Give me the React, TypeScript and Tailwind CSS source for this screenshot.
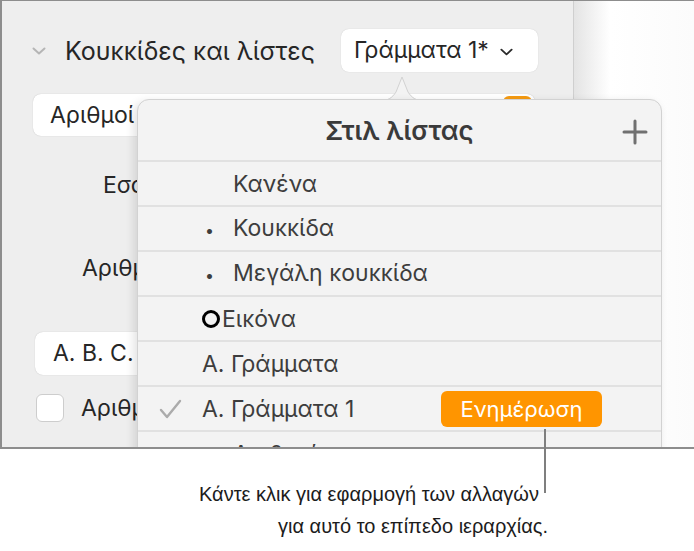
const font = { fontFamily: "Inter, 'Noto Sans', sans-serif" }
const calloutFont = { fontFamily: "'Liberation Sans', Arial, sans-serif" }

const Chevron = ({ className }: { className: string }) => (
  <svg viewBox="0 0 14 8" className={className} fill="none" stroke="currentColor" strokeWidth="2" strokeLinecap="round" strokeLinejoin="round">
    <path d="M1.5 1.5 7 6.5l5.5-5" />
  </svg>
)

const Row = ({ mark, children, last }: { mark?: React.ReactNode; children: React.ReactNode; last?: boolean }) => (
  <div className={`relative flex h-[45px] items-center ${last ? "" : "border-b-2 border-[#e1e1e1]"}`}>
    <div className="flex w-[64px] shrink-0 justify-end pr-[2px]">{mark}</div>
    <div className="text-[23px] leading-[28px] text-[#3d3d3d]">{children}</div>
  </div>
)

const Bullet = () => <span className="ml-[3px] mr-[19px] text-[16px]">•</span>

export default function App() {
  return (
    <div className="relative h-[551px] w-[694px] overflow-hidden bg-white" style={font}>
      {/* framed screenshot */}
      <div className="relative flex h-[449px] overflow-hidden border-b-2 border-l-2 border-t border-[#8d8d8d]">
        <div className="w-[572px] shrink-0 border-r border-[#cfcfcf] bg-[#eeeeee]">
          <div className="mt-[28px] flex h-[43px] items-center pl-[30px]">
            <Chevron className="h-[8px] w-[14px] text-[#b5b5b5]" />
            <span className="ml-[19px] w-[276px] text-[25px] leading-[30px] text-[#262626]">Κουκκίδες και λίστες</span>
            <div className="flex h-[43px] w-[197px] items-center rounded-lg bg-white pl-[13px] text-[23px] text-[#262626] shadow-[0_0_1px_rgba(0,0,0,0.2)]">
              Γράμματα 1*
              <Chevron className="ml-[11px] mt-[2px] h-[8px] w-[13px] text-[#2a2a2a]" />
            </div>
          </div>
          <div className="ml-[31px] mt-[22px] flex h-[42px] w-[502px] items-start justify-between rounded-lg bg-white pl-[17px] shadow-[0_0_1px_rgba(0,0,0,0.25)]">
            <span className="mt-[7px] text-[23px] leading-[28px] text-[#262626]">Αριθμοί</span>
            <div className="mr-[3px] mt-[2px] h-[28px] w-[29px] rounded-md bg-[#f59b12]" />
          </div>
          <div className="ml-[101px] mt-[35px] text-[23px] leading-[28px] text-[#262626]">Εσοχή</div>
          <div className="ml-[80px] mt-[55px] text-[23px] leading-[28px] text-[#262626]">Αριθμός</div>
          <div className="ml-[33px] mt-[50px] flex h-[43px] w-[240px] items-center rounded-lg bg-white pl-[18px] text-[23px] text-[#262626] shadow-[0_0_1px_rgba(0,0,0,0.25)]">
            A. B. C.
          </div>
          <div className="ml-[34px] mt-[18px] flex h-[29px] items-center">
            <div className="h-[28px] w-[28px] rounded-md border border-[#cdcdcd] bg-white" />
            <span className="ml-[17px] text-[23px] leading-[28px] text-[#262626]">Αριθμοί</span>
          </div>
        </div>
        <div className="flex-1 bg-gradient-to-r from-[#e4e4e4] via-white via-30% to-[#fbfbfb]" />

        {/* popover arrow */}
        <svg className="absolute left-[376px] top-[73px] h-[28px] w-[48px]" viewBox="0 0 48 28">
          <path d="M0 27 C10 27 14 24 18 18 L24 3 L30 18 C34 24 38 27 48 27 L48 28 L0 28 Z" fill="#f3f3f3" stroke="#d2d2d2" strokeWidth="1" />
        </svg>

        {/* popover */}
        <div className="absolute left-[135px] top-[98px] w-[525px] rounded-[12px] border border-[#d2d2d2] bg-[#f3f3f3] shadow-[-3px_3px_10px_rgba(0,0,0,0.12)]">
          <div className="relative flex h-[62px] items-center justify-center border-b-2 border-[#e1e1e1]">
            <span className="text-[26px] font-semibold text-[#3a3a3a]">Στιλ λίστας</span>
            <svg className="absolute right-[13px] top-[19px] h-[26px] w-[26px]" viewBox="0 0 26 26" stroke="#707070" strokeWidth="3" strokeLinecap="round">
              <path d="M13 2v22M2 13h22" />
            </svg>
          </div>
          <Row><span className="ml-[31px]">Κανένα</span></Row>
          <Row><Bullet />Κουκκίδα</Row>
          <Row><Bullet />Μεγάλη κουκκίδα</Row>
          <Row>
            <span className="flex items-center">
              <span className="mr-[2px] inline-block h-[18px] w-[18px] rounded-full border-[3px] border-black" />
              Εικόνα
            </span>
          </Row>
          <Row>A. Γράμματα</Row>
          <Row
            mark={
              <svg className="mr-[18px] h-[20px] w-[23px]" viewBox="0 0 23 20" fill="none" stroke="#ababab" strokeWidth="2.4" strokeLinecap="round" strokeLinejoin="round">
                <path d="M2 11l6 7L21 2" />
              </svg>
            }
          >
            <span className="flex items-center">
              <span className="w-[239px]">A. Γράμματα 1</span>
              <span className="flex h-[36px] w-[161px] items-center justify-center rounded-md bg-[#ff9500] text-[22px] text-white">
                Ενημέρωση
              </span>
            </span>
          </Row>
          <Row last><Bullet />Αριθμοί</Row>
        </div>
      </div>

      {/* callout */}
      <div className="absolute left-[544px] top-[429px] h-[64px] w-[2px] bg-[#7f7f7f]" />
      <div className="ml-[148px] mt-[29px] w-[400px] whitespace-nowrap text-right text-[20px] leading-[32px] text-[#1c1c1c]" style={calloutFont}>
        <div className="pr-[9px]">Κάντε κλικ για εφαρμογή των αλλαγών</div>
        <div>για αυτό το επίπεδο ιεραρχίας.</div>
      </div>
    </div>
  )
}
